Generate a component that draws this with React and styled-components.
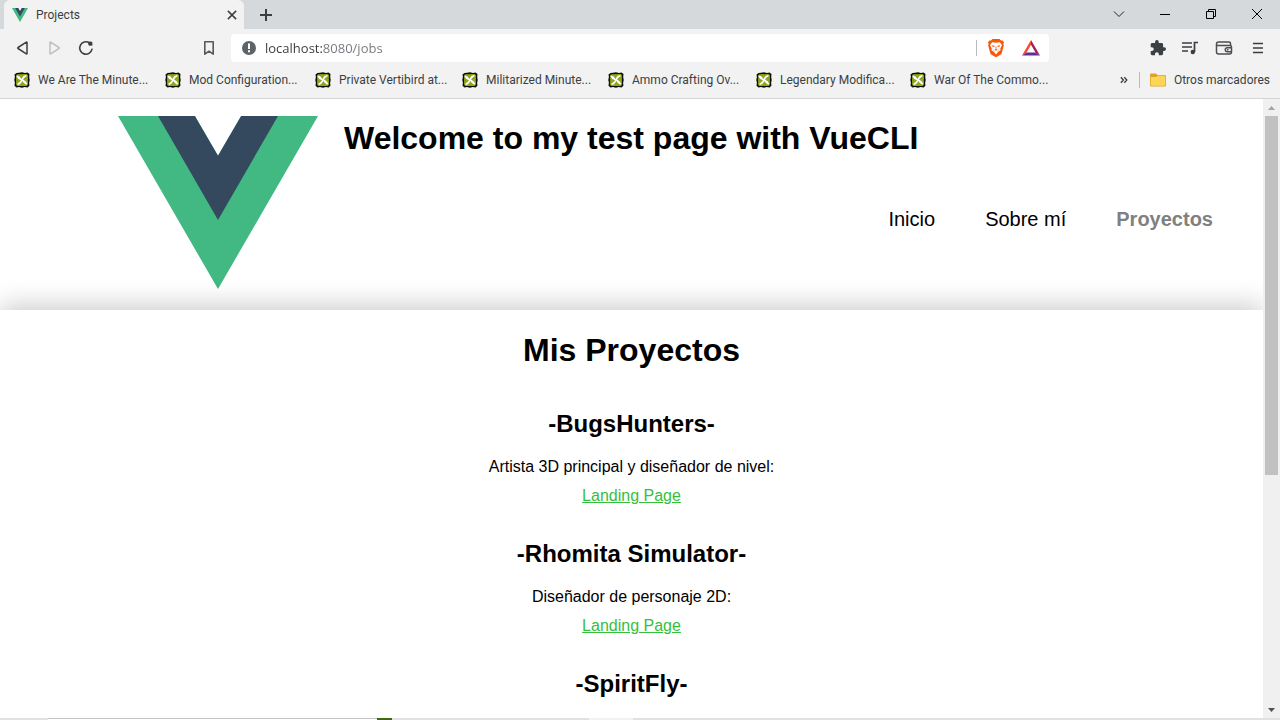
import React from "react";
import styled, { createGlobalStyle } from "styled-components";

const GlobalStyle = createGlobalStyle`
  *, *::before, *::after { box-sizing: border-box; }
  body { margin: 0; background: #fff; }
  button { font: inherit; color: inherit; background: none; border: 0; padding: 0; }
  h1, h2, p { margin: 0; }
`;

const Window = styled.div`
  display: flex;
  flex-direction: column;
  height: 100vh;
  overflow: hidden;
  font-family: "Liberation Sans", Arial, sans-serif;
  color: #000;
`;

const Chrome = styled.header`
  flex: none;
  font-family: "Segoe UI", Roboto, sans-serif;
  font-size: 12px;
  color: #3b3e42;
  background: #f2f2f2;
  border-bottom: 1px solid #d3d4d6;
`;

const TabStrip = styled.div`
  display: flex;
  height: 29px;
  padding-left: 4px;
  background: #d5d9dc;
`;

const Tab = styled.div`
  display: flex;
  align-items: center;
  gap: 8px;
  width: 240px;
  padding: 0 6px 0 8px;
  background: #f2f2f2;
  border-radius: 6px 6px 0 0;
`;

const TabTitle = styled.span`
  flex: 1;
`;

const IconButton = styled.button`
  display: flex;
  flex: none;
  align-items: center;
  justify-content: center;
  width: ${(p) => p.$width || 32}px;
  height: ${(p) => p.$height || 28}px;
`;

const WindowControls = styled.div`
  display: flex;
  margin-left: auto;
`;

const Toolbar = styled.div`
  display: flex;
  align-items: center;
  justify-content: space-between;
  height: 38px;
  padding: 0 6px;
`;

const ToolbarGroup = styled.div`
  display: flex;
`;

const AddressArea = styled.div`
  display: flex;
  flex: 1;
  align-items: center;
  gap: 6px;
  max-width: 856px;
  margin: 0 auto 0 91px;
`;

const AddressBar = styled.div`
  display: flex;
  flex: 1;
  align-items: center;
  height: 28px;
  padding: 0 2px 0 10px;
  gap: 8px;
  background: #fff;
  border-radius: 4px;
`;

const AddressInput = styled.input`
  flex: 1;
  min-width: 0;
  padding: 0;
  border: 0;
  outline: 0;
  font: 13px/20px "Segoe UI", "Open Sans", sans-serif;
  color: transparent;
  background: linear-gradient(to right, #36393d 58px, #73777c 58px);
  -webkit-background-clip: text;
  background-clip: text;
`;

const Divider = styled.span`
  width: 1px;
  height: 16px;
  background: #b9bbbe;
`;

const BookmarkBar = styled.nav`
  display: flex;
  align-items: center;
  justify-content: space-between;
  height: 31px;
  padding: 0 10px 5px 14px;
`;

const BookmarkList = styled.div`
  display: grid;
  grid-template-columns: 151px 150px 147px 146px 148px 154px auto;
`;

const Bookmark = styled.a`
  display: flex;
  align-items: center;
  gap: 8px;
  color: inherit;
  text-decoration: none;
  white-space: nowrap;
`;

const BookmarkEnd = styled.div`
  display: flex;
  align-items: center;
  gap: 10px;
`;

const Viewport = styled.div`
  display: flex;
  flex: 1;
  min-height: 0;
`;

const Page = styled.div`
  flex: 1;
  overflow: hidden;
  background: #fff;
`;

const SiteHeader = styled.div`
  display: flex;
  height: 211px;
  padding: 17px 50px 0 118px;
  gap: 26px;
`;

const SiteHeading = styled.div`
  flex: 1;
`;

const Title = styled.h1`
  font-size: 32px;
  line-height: 44px;
`;

const SiteNav = styled.nav`
  display: flex;
  justify-content: flex-end;
  gap: 50px;
  padding-top: 47px;
`;

const NavLink = styled.a`
  font-size: 20px;
  line-height: 24px;
  text-decoration: none;
  color: ${(p) => (p.$active ? "#808080" : "#000")};
  font-weight: ${(p) => (p.$active ? "bold" : "normal")};
`;

const Projects = styled.main`
  position: relative;
  min-height: 900px;
  padding-top: 18px;
  text-align: center;
  background: #fff;
  box-shadow: 0 -5px 25px rgba(0, 0, 0, 0.2);
`;

const Project = styled.section`
  padding-top: 34px;
  height: 130px;
`;

const ProjectName = styled.h2`
  font-size: 24px;
  line-height: 36px;
`;

const ProjectText = styled.p`
  padding-top: 10px;
  font-size: 16px;
  line-height: 29px;
`;

const ProjectLink = styled.a`
  color: #35bf3b;
`;

const Scrollbar = styled.div`
  display: flex;
  flex: none;
  flex-direction: column;
  align-items: center;
  width: 17px;
  background: #f0f0f0;
`;

const ScrollTrack = styled.div`
  flex: 1;
  width: 13px;
`;

const ScrollThumb = styled.div`
  height: 61.4%;
  background: #c1c1c1;
`;

const BottomEdge = styled.div`
  display: flex;
  flex: none;
  height: 2px;
  background: #e1e1e1;
`;

const EdgePart = styled.span`
  width: ${(p) => p.$width}px;
  background: ${(p) => p.$color};
  border-top: ${(p) => (p.$outlined ? "1px solid #c4c4c4" : "0")};
`;

const LogoSvg = styled.svg`
  flex: none;
`;

const VueLogo = ({ width, height }) => (
  <LogoSvg width={width} height={height} viewBox="0 0 262 227" preserveAspectRatio="none" role="img" aria-label="Vue">
    <path fill="#42b883" d="M0 0h100.700L131 52l30.300-52H262L131 227z" />
    <path fill="#35495e" d="M52.400 0h48.300L131 52l30.300-52h48.300L131 136.500z" />
  </LogoSvg>
);

const NexusIcon = () => (
  <svg width="16" height="16" viewBox="0 0 16 16" aria-hidden="true">
    <path fill="#0c0f05" d="M2.500 1 5 .8 8 .3l3 .7 2.500-.5L15.500 2l-.3 3 .5 3-.6 3 .4 2.500-1.800 2-3-.4-2.700.6-3-.6-2.500.4-2-1.800.4-3L.3 8l.6-3L.5 2.500z" />
    <path fill="#8fa51d" d="M3.500 2.200 12.500 2q1.300.2 1.400 1.500v9q-.2 1.300-1.500 1.400h-9q-1.200-.2-1.300-1.400v-9q.1-1.100 1.400-1.300z" />
    <path fill="#fff" d="M3 3.500Q6 4 7.400 6.900 8.800 3.600 11.800 2.900L13 4Q10.300 5.200 9 7.600q3.200 1.400 4.300 4.200L12.300 12.800Q9.800 12 8.400 9.100 7 12.200 4.200 13L3 12Q5.600 10.800 7 8.300 3.600 7.400 2.500 4.500z" />
  </svg>
);

const FolderIcon = () => (
  <svg width="16" height="14" viewBox="0 0 16 14" aria-hidden="true">
    <path fill="#dca42d" d="M0 1.500Q0 .500 1 .500h5l1.500 1.500H15q1 0 1 1v9.500q0 1-1 1H1q-1 0-1-1z" />
    <path fill="#ffd557" d="M.700 4H6l1.500-1.200H15.300V12q0 .7-.7.7H1.400Q.7 12.700.7 12z" />
  </svg>
);

const Stroke = ({ size = 16, width = 1.5, color = "#3b3e42", d }) => (
  <svg width={size} height={size} viewBox="0 0 16 16" fill="none" stroke={color} strokeWidth={width} strokeLinejoin="round" aria-hidden="true">
    <path d={d} />
  </svg>
);

const ReloadIcon = () => (
  <svg width="16" height="16" viewBox="0 0 16 16" fill="none" aria-hidden="true">
    <path stroke="#3b3e42" strokeWidth="1.6" strokeLinecap="round" d="M14 9.200A6.200 6.200 0 1 1 11.300 2.800" />
    <path fill="#3b3e42" d="M10.200 1.800Q13.500 1 14.300 2.200l.2 3.400-3.200.2q-1-.5-1.100-2z" />
  </svg>
);

const InfoIcon = () => (
  <svg width="16" height="16" viewBox="0 0 16 16" aria-hidden="true">
    <circle cx="8" cy="8" r="7" fill="#5f6368" />
    <path fill="#fff" d="M7 3.500h2v5.500H7zM7 10.300h2v2H7z" />
  </svg>
);

const BraveIcon = () => (
  <svg width="18" height="20" viewBox="0 0 18 20" aria-hidden="true">
    <path fill="#fb5607" d="M5.500 1h7L14 2.600l1.600-.2 1.400 2-.6 1.600.4 1.500-2 7.500q-.3 1-1.300 1.700L9 19.300l-4.500-2.600q-1-.7-1.300-1.700l-2-7.500.4-1.500L1 4.400l1.400-2 1.600.2z" />
    <path fill="#fff" d="M5.200 4.200 9 4.800l3.800-.6 2.200 2.700-1.700 3.700.2 1.600-2.500 1.800L9 16.400 7 14l-2.500-1.800.2-1.600L3 6.900z" />
    <path fill="#fb5607" d="m5 7.200 2.600.6-.4 1.300-1.700-.4zM13 7.200l-2.600.6.4 1.300 1.700-.4zM8.500 8.500h1l-.2 2.500 1.200.7-1.500 1-1.500-1 1.200-.7zM6.200 12l1.500 1-.7.400zM11.800 12l-1.500 1 .7.400z" />
  </svg>
);

const BatIcon = () => (
  <svg width="18" height="16" viewBox="0 0 18 16" aria-hidden="true">
    <path fill="#ff4724" d="M9 0v4.700L4.500 12.400 0 15.500z" />
    <path fill="#9e1f63" d="m9 0 9 15.500-4.500-3.100L9 4.700z" />
    <path fill="#662d91" d="M0 15.500l4.500-3.100h9l4.500 3.100z" />
  </svg>
);

const PuzzleIcon = () => (
  <svg width="16" height="16" viewBox="1 1 22 22" fill="#3b3e42" aria-hidden="true">
    <path d="M20.500 11H19V7c0-1.100-.9-2-2-2h-4V3.500a2.500 2.500 0 0 0-5 0V5H4c-1.100 0-2 .9-2 2v3.800h1.500a2.700 2.700 0 0 1 0 5.400H2V20c0 1.100.9 2 2 2h3.800v-1.500a2.700 2.700 0 0 1 5.400 0V22H17c1.100 0 2-.9 2-2v-4h1.500a2.500 2.500 0 0 0 0-5z" />
  </svg>
);

const PlaylistIcon = () => (
  <svg width="18" height="16" viewBox="0 0 18 16" fill="none" stroke="#3b3e42" strokeWidth="1.7" aria-hidden="true">
    <path d="M1 3h10M1 7h10M1 11h6M13.500 12V2.500H17" />
    <circle cx="11.800" cy="12" r="2.200" fill="#3b3e42" stroke="none" />
  </svg>
);

const WalletIcon = () => (
  <svg width="18" height="16" viewBox="0 0 18 16" fill="none" stroke="#4b4e52" strokeWidth="1.500" strokeLinejoin="round" aria-hidden="true">
    <path d="M15.500 5V3.500Q15.500 2 14 2H3.500Q1.500 2 1.500 4t2 1.500H15q1.500 0 1.500 1.500v5q0 2-2 2h-11q-2 0-2-2V4M16.500 7.800h-4.200a2 2 0 0 0 0 4h4.200" />
    <path d="M12 9.800h1.500" />
  </svg>
);

const ScrollArrow = ({ up }) => (
  <svg width="7" height="4" viewBox="0 0 7 4" aria-hidden="true">
    <path fill={up ? "#a3a3a3" : "#505050"} d={up ? "M0 4h7L3.500 0z" : "M0 0h7L3.500 4z"} />
  </svg>
);

const bookmarks = [
  "We Are The Minute...",
  "Mod Configuration...",
  "Private Vertibird at...",
  "Militarized Minute...",
  "Ammo Crafting Ov...",
  "Legendary Modifica...",
  "War Of The Commo...",
];

const projects = [
  { name: "-BugsHunters-", text: "Artista 3D principal y diseñador de nivel:" },
  { name: "-Rhomita Simulator-", text: "Diseñador de personaje 2D:" },
  { name: "-SpiritFly-" },
];

export default function App() {
  return (
    <Window>
      <GlobalStyle />
      <Chrome>
        <TabStrip>
          <Tab>
            <VueLogo width={16} height={14} />
            <TabTitle>Projects</TabTitle>
            <IconButton $width={12} aria-label="Close tab">
              <Stroke size={12} width={2} d="m2.500 2.500 11 11m0-11-11 11" />
            </IconButton>
          </Tab>
          <IconButton $width={44} $height={30} aria-label="New tab">
            <Stroke width={2} d="M8 2v12M2 8h12" />
          </IconButton>
          <WindowControls>
            <IconButton $width={46} aria-label="Search tabs">
              <Stroke width={1} color="#222" d="m3 5.500 5 5 5-5" />
            </IconButton>
            <IconButton $width={46} aria-label="Minimize">
              <Stroke width={1} color="#000" d="M3 8.500h10" />
            </IconButton>
            <IconButton $width={46} aria-label="Restore">
              <Stroke width={1} color="#000" d="M3.500 5.500h7v7h-7zM5.500 5.500v-2h7v7h-2" />
            </IconButton>
            <IconButton $width={46} aria-label="Close">
              <Stroke width={1} color="#000" d="m3 3 10 10M13 3 3 13" />
            </IconButton>
          </WindowControls>
        </TabStrip>
        <Toolbar>
          <ToolbarGroup>
            <IconButton aria-label="Back">
              <Stroke d="M13 2.500v11q0 .6-.6.300L4 8.500q-.6-.5 0-1l8.400-5.300q.6-.3.600.300z" />
            </IconButton>
            <IconButton aria-label="Forward">
              <Stroke color="#bfc0c2" d="M4 2.500v11q0 .6.600.300L13 8.500q.6-.5 0-1L4.600 2.200Q4 1.900 4 2.500z" />
            </IconButton>
            <IconButton aria-label="Reload">
              <ReloadIcon />
            </IconButton>
          </ToolbarGroup>
          <AddressArea>
            <IconButton aria-label="Bookmark this page">
              <Stroke width={1.6} color="#55585c" d="M3.800 1.800h8.400v12.400L8 11.200l-4.200 3z" />
            </IconButton>
            <AddressBar>
              <InfoIcon />
              <AddressInput aria-label="Address" defaultValue="localhost:8080/jobs" />
              <Divider />
              <IconButton $width={22} aria-label="Brave Shields">
                <BraveIcon />
              </IconButton>
              <IconButton aria-label="Brave Rewards">
                <BatIcon />
              </IconButton>
            </AddressBar>
          </AddressArea>
          <ToolbarGroup>
            <IconButton aria-label="Extensions">
              <PuzzleIcon />
            </IconButton>
            <IconButton aria-label="Media">
              <PlaylistIcon />
            </IconButton>
            <IconButton $width={36} aria-label="Wallet">
              <WalletIcon />
            </IconButton>
            <IconButton aria-label="Menu">
              <Stroke d="M3 3.500h10M3 8h10M3 12.500h10" />
            </IconButton>
          </ToolbarGroup>
        </Toolbar>
        <BookmarkBar>
          <BookmarkList>
            {bookmarks.map((name) => (
              <Bookmark href="#" key={name}>
                <NexusIcon />
                {name}
              </Bookmark>
            ))}
          </BookmarkList>
          <BookmarkEnd>
            <IconButton $width={10} $height={16} aria-label="More bookmarks">
              <Stroke size={12} width={2.2} d="m3 3.500 4 4.500-4 4.500m5.500-9 4 4.500-4 4.500" />
            </IconButton>
            <Divider />
            <Bookmark href="#">
              <FolderIcon />
              Otros marcadores
            </Bookmark>
          </BookmarkEnd>
        </BookmarkBar>
      </Chrome>
      <Viewport>
        <Page>
          <SiteHeader>
            <VueLogo width={200} height={173} />
            <SiteHeading>
              <Title>Welcome to my test page with VueCLI</Title>
              <SiteNav>
                <NavLink href="#">Inicio</NavLink>
                <NavLink href="#">Sobre mí</NavLink>
                <NavLink href="#" $active>
                  Proyectos
                </NavLink>
              </SiteNav>
            </SiteHeading>
          </SiteHeader>
          <Projects>
            <Title>Mis Proyectos</Title>
            {projects.map(({ name, text }) => (
              <Project key={name}>
                <ProjectName>{name}</ProjectName>
                {text && (
                  <ProjectText>
                    {text}
                    <br />
                    <ProjectLink href="#">Landing Page</ProjectLink>
                  </ProjectText>
                )}
              </Project>
            ))}
          </Projects>
        </Page>
        <Scrollbar>
          <IconButton $width={17} $height={17} aria-label="Scroll up">
            <ScrollArrow up />
          </IconButton>
          <ScrollTrack>
            <ScrollThumb />
          </ScrollTrack>
          <IconButton $width={17} $height={17} aria-label="Scroll down">
            <ScrollArrow />
          </IconButton>
        </Scrollbar>
      </Viewport>
      <BottomEdge>
        <EdgePart $width={48} $color="#e1e1e1" />
        <EdgePart $width={329} $color="#fff" $outlined />
        <EdgePart $width={15} $color="#3c6a12" />
        <EdgePart $width={197} $color="#e1e1e1" />
        <EdgePart $width={44} $color="#f2f2f2" />
      </BottomEdge>
    </Window>
  );
}
